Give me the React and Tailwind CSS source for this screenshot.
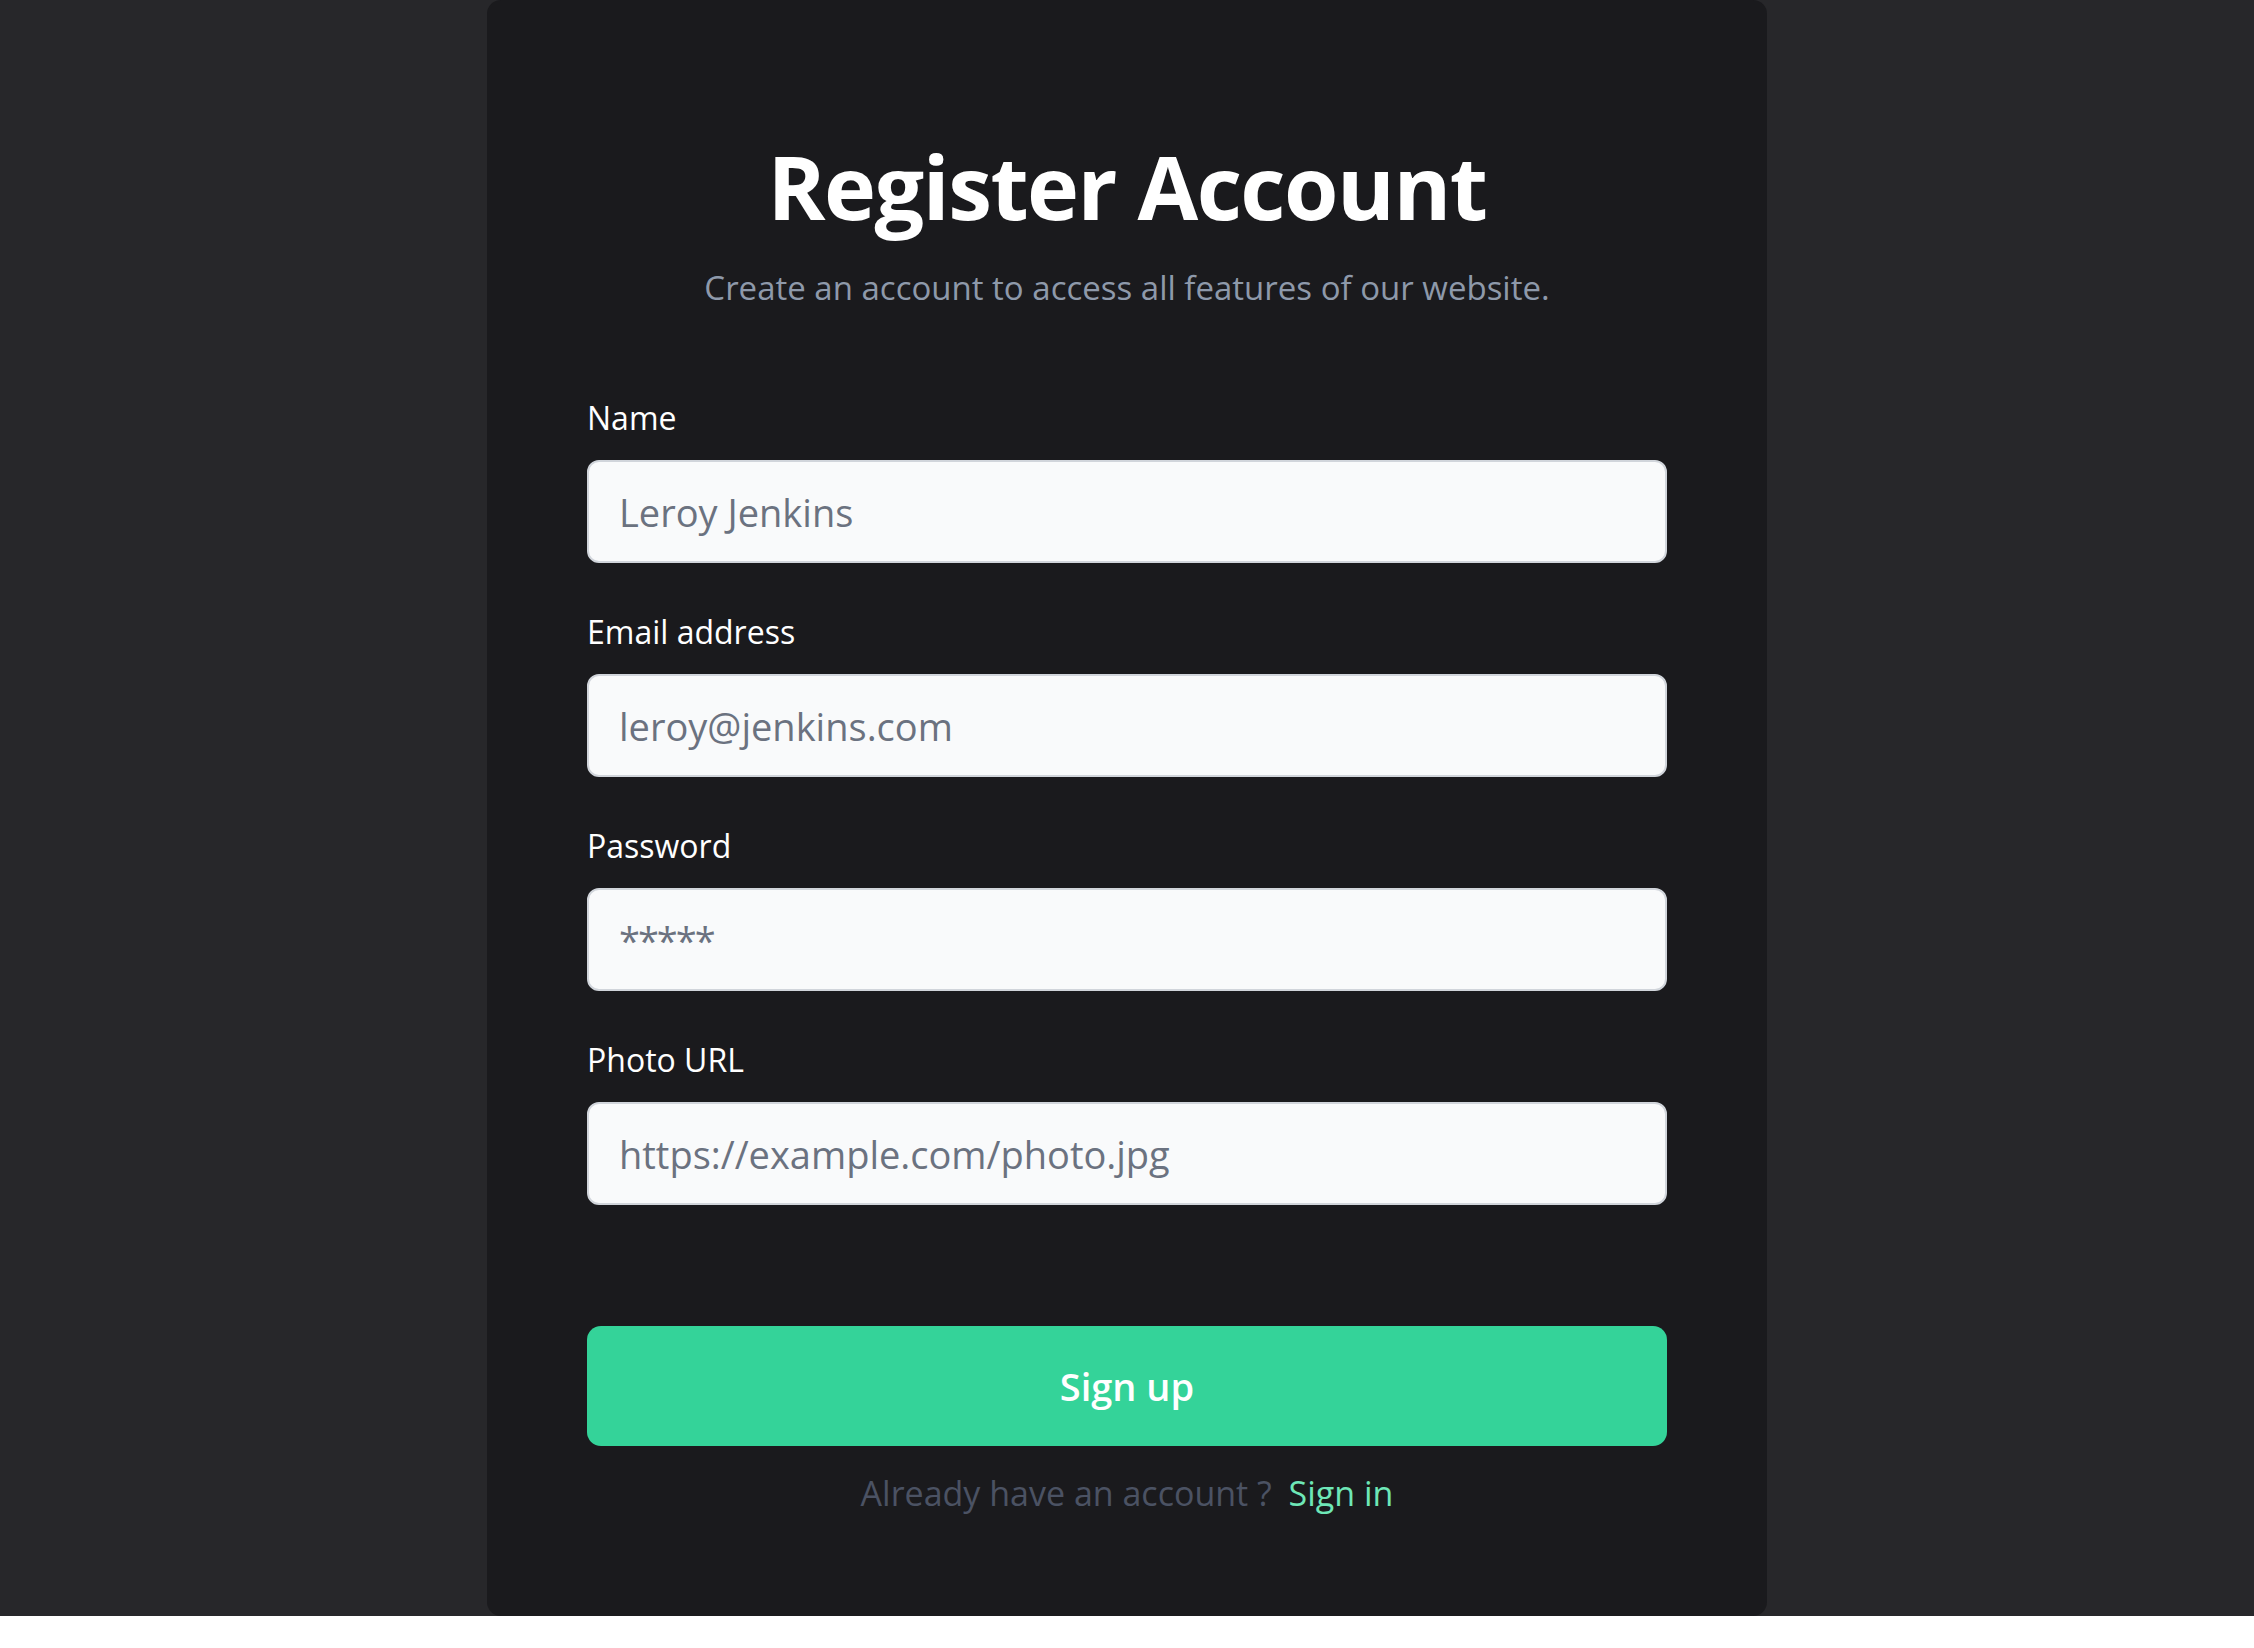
import React, { useState } from 'react';

export default function App() {
  const [form, setForm] = useState({ name: '', email: '', password: '', photo: '' });

  const update = (key) => (e) => setForm({ ...form, [key]: e.target.value });

  const fields = [
    { key: 'name', label: 'Name', type: 'text', placeholder: 'Leroy Jenkins' },
    { key: 'email', label: 'Email address', type: 'email', placeholder: 'leroy@jenkins.com' },
    { key: 'password', label: 'Password', type: 'password', placeholder: '*****' },
    { key: 'photo', label: 'Photo URL', type: 'text', placeholder: 'https://example.com/photo.jpg' }
  ];

  return (
    <div className="bg-[#27272a] flex justify-center font-['Open_Sans',sans-serif]">
      <div className="w-[1280px] bg-[#1a1a1d] rounded-[14px] px-[100px] pt-[142px] pb-[106px]">
        <h1 className="text-center text-white font-bold text-[88px] tracking-[-1.5px] leading-none">Register Account</h1>
        <p className="mt-[41px] text-center text-[#8e99aa] text-[33px] leading-none">
          Create an account to access all features of our website.
        </p>

        <form className="mt-[98px] flex flex-col gap-[53px]" onSubmit={(e) => e.preventDefault()}>
          {fields.map((f) => (
            <div key={f.key} className="flex flex-col">
              <label className="text-white text-[32px] leading-none mb-[26px]">{f.label}</label>
              <input
                type={f.type === 'password' ? 'text' : f.type}
                value={form[f.key]}
                onChange={update(f.key)}
                placeholder={f.placeholder}
                className={
                  f.key === 'password'
                    ? 'h-[103px] w-full rounded-[12px] border-2 border-[#d1d5db] bg-[#f9fafb] px-[30px] text-[38px] tracking-[-2px] text-[#374151] placeholder:text-[#6b7280] outline-none'
                    : 'h-[103px] w-full rounded-[12px] border-2 border-[#d1d5db] bg-[#f9fafb] px-[30px] text-[38px] text-[#374151] placeholder:text-[#6b7280] outline-none'
                }
              />
            </div>
          ))}
        </form>

        <button className="mt-[121px] w-full h-[120px] rounded-[14px] bg-[#34d399] text-white font-semibold text-[38px] leading-none">
          Sign up
        </button>

        <p className="mt-[30px] text-center text-[34px] leading-none text-[#4b5263]">
          Already have an account ?{' '}
          <a href="#" className="ml-[8px] text-[#6ee7b7]">Sign in</a>
        </p>
      </div>
    </div>
  );
}
